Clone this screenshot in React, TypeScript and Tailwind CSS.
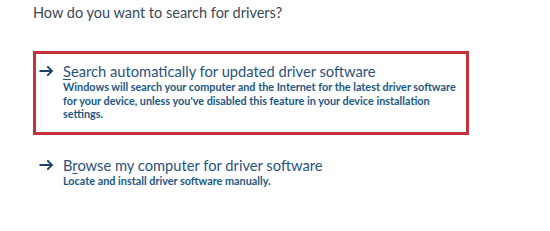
import React from 'react';

const Arrow: React.FC = () => (
  <svg width="15" height="12" viewBox="0 0 15 12" fill="none" className="shrink-0">
    <path d="M0.5 6h12.5M8.3 1.3 13 6l-4.7 4.7" stroke="#1d3f6b" strokeWidth="1.9" />
  </svg>
);

interface OptionProps {
  title: React.ReactNode;
  lines: string[];
}

const Option: React.FC<OptionProps> = ({ title, lines }) => (
  <div className="flex flex-col">
    <div className="flex items-center gap-[9px]">
      <Arrow />
      <span className="whitespace-nowrap text-[14.7px] leading-[18px] text-[#2a5280]">{title}</span>
    </div>
    <div className="pl-[24px] text-[10.85px] leading-[13.5px] font-bold text-[#1d5886] whitespace-nowrap">
      {lines.map(l => (
        <div key={l}>{l}</div>
      ))}
    </div>
  </div>
);

export default function App() {
  return (
    <div
      className="w-[550px] h-[231px] bg-white pl-[33px] pt-[4px]"
      style={{ fontFamily: 'Lato, "Open Sans", sans-serif' }}
    >
      <div className="text-[14.5px] leading-[18px] text-[#3a4756]">How do you want to search for drivers?</div>
      <div className="mt-[29px] w-[436px] h-[84px] border-[3px] border-[#c5323c] pl-[3px] pt-[8px]">
        <Option
          title={<><span className="underline underline-offset-2">S</span>earch automatically for updated driver software</>}
          lines={[
            'Windows will search your computer and the Internet for the latest driver software',
            "for your device, unless you've disabled this feature in your device installation",
            'settings.',
          ]}
        />
      </div>
      <div className="mt-[21px] pl-[6px]">
        <Option
          title={<>B<span className="underline underline-offset-2">r</span>owse my computer for driver software</>}
          lines={['Locate and install driver software manually.']}
        />
      </div>
    </div>
  );
}
